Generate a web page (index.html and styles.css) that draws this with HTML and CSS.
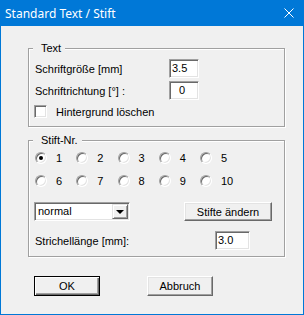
FILE: index.html
```html
<!DOCTYPE HTML>
<html>
<head>
<link rel="stylesheet" href="styles.css">
</head>
<body>
<div class="window">
    <div class="titlebar">
        <span class="title">Standard Text / Stift</span>
        <svg class="close" width="10" height="10" viewBox="0 0 10 10">
            <path d="M0.5 0.5 L9.5 9.5 M9.5 0.5 L0.5 9.5" stroke="#fff" stroke-width="1" fill="none"/>
        </svg>
    </div>
    <div class="client">
        <fieldset class="group">
            <legend>Text</legend>
            <div class="field-grid">
                <span>Schriftgröße [mm]</span>
                <span class="edit">3.5</span>
                <span>Schriftrichtung [°] :</span>
                <span class="edit edit-indent">0</span>
            </div>
            <div class="check-row">
                <span class="checkbox"></span>
                <span>Hintergrund löschen</span>
            </div>
        </fieldset>

        <fieldset class="group group-pen">
            <legend>Stift-Nr.</legend>
            <div class="radio-grid">
                <label class="radio"><span class="dot checked"></span>1</label>
                <label class="radio"><span class="dot"></span>2</label>
                <label class="radio"><span class="dot"></span>3</label>
                <label class="radio"><span class="dot"></span>4</label>
                <label class="radio"><span class="dot"></span>5</label>
                <label class="radio"><span class="dot"></span>6</label>
                <label class="radio"><span class="dot"></span>7</label>
                <label class="radio"><span class="dot"></span>8</label>
                <label class="radio"><span class="dot"></span>9</label>
                <label class="radio"><span class="dot"></span>10</label>
            </div>
            <div class="combo-row">
                <div class="combo">
                    <span class="combo-text">normal</span>
                    <span class="combo-btn"><span class="arrow"></span></span>
                </div>
                <span class="btn btn-pens">Stifte ändern</span>
            </div>
            <div class="dash-row">
                <span>Strichellänge [mm]:</span>
                <span class="edit edit-dash">3.0</span>
            </div>
        </fieldset>

        <div class="actions">
            <span class="btn btn-default">OK</span>
            <span class="btn">Abbruch</span>
        </div>
    </div>
</div>
</body>
</html>
```

FILE: styles.css
```css
body {
    margin: 0;
    background: #f0f0f0;
    font-family: "Liberation Sans", Arial, sans-serif;
    font-size: 11px;
    color: #000;
}

.window {
    width: 304px;
    height: 315px;
    box-sizing: border-box;
    border: 1px solid #0078d7;
    border-top: none;
    background: #f0f0f0;
}

.titlebar {
    height: 26px;
    margin: 0 -1px;
    padding: 0 10px 0 5px;
    display: flex;
    align-items: center;
    justify-content: space-between;
    background: #0078d7;
    color: #fff;
    font-family: "Noto Sans", sans-serif;
    font-size: 12px;
}

.client {
    padding: 16px 18px 0 27px;
}

.group {
    margin: 0;
    padding: 0 6px;
    min-width: 0;
    border: 1px solid #a0a0a0;
    box-shadow: 1px 1px 0 #fff, inset 1px 1px 0 #fff;
}

.group legend {
    margin-left: -2px;
    padding: 0 4px 0 8px;
    line-height: 13px;
    background: #f0f0f0;
}

.group-pen {
    margin-top: 7px;
}

.field-grid {
    margin-top: 4px;
    display: grid;
    grid-template-columns: 134px 30px;
    grid-auto-rows: 19px;
    row-gap: 3px;
    align-items: center;
}

.edit {
    box-sizing: border-box;
    height: 19px;
    padding-left: 2px;
    line-height: 17px;
    background: #fff;
    border: 1px solid;
    border-color: #a0a0a0 #fff #fff #a0a0a0;
    box-shadow: inset 1px 1px 0 #696969, inset -1px -1px 0 #e3e3e3;
}

.edit-indent {
    padding-left: 9px;
}

.check-row {
    margin: 5px 0 8px -1px;
    height: 13px;
    display: flex;
    align-items: center;
    gap: 9px;
}

.checkbox {
    box-sizing: border-box;
    width: 13px;
    height: 13px;
    background: #fff;
    border: 1px solid;
    border-color: #a0a0a0 #fff #fff #a0a0a0;
    box-shadow: inset 1px 1px 0 #696969, inset -1px -1px 0 #e3e3e3;
}

.radio-grid {
    margin-top: 1px;
    display: grid;
    grid-template-columns: repeat(5, 41.25px);
    grid-auto-rows: 19px;
    row-gap: 4px;
    align-items: center;
}

.radio {
    display: flex;
    align-items: center;
    gap: 9px;
}

.dot {
    box-sizing: border-box;
    width: 12px;
    height: 12px;
    border-radius: 50%;
    background: #fff;
    border: 1px solid;
    border-color: #a0a0a0 #fff #fff #a0a0a0;
    box-shadow: inset 1px 1px 0 #696969, inset -1px -1px 0 #e3e3e3;
    display: flex;
    align-items: center;
    justify-content: center;
}

.dot.checked::after {
    content: "";
    width: 4px;
    height: 4px;
    border-radius: 50%;
    background: #000;
}

.combo-row {
    margin-top: 12px;
    height: 19px;
    display: flex;
    align-items: center;
}

.combo {
    box-sizing: border-box;
    width: 96px;
    height: 19px;
    margin-left: -1px;
    display: flex;
    background: #fff;
    border: 1px solid;
    border-color: #a0a0a0 #fff #fff #a0a0a0;
    box-shadow: inset 1px 1px 0 #696969, inset -1px -1px 0 #e3e3e3;
    padding: 1px;
}

.combo-text {
    flex: 1;
    padding-left: 2px;
    line-height: 15px;
}

.combo-btn {
    box-sizing: border-box;
    width: 16px;
    height: 15px;
    background: #f0f0f0;
    border: 1px solid;
    border-color: #e3e3e3 #696969 #696969 #e3e3e3;
    box-shadow: inset 1px 1px 0 #fff, inset -1px -1px 0 #a0a0a0;
    display: flex;
    align-items: center;
    justify-content: center;
}

.arrow {
    width: 0;
    height: 0;
    border-left: 4px solid transparent;
    border-right: 4px solid transparent;
    border-top: 4px solid #000;
}

.btn {
    box-sizing: border-box;
    width: 66px;
    height: 20px;
    display: flex;
    align-items: center;
    justify-content: center;
    background: #f0f0f0;
    border: 1px solid;
    border-color: #fff #696969 #696969 #fff;
    box-shadow: inset -1px -1px 0 #a0a0a0, inset 1px 1px 0 #e3e3e3;
}

.btn-pens {
    width: 88px;
    height: 19px;
    margin-left: auto;
    margin-right: 6px;
}

.btn-default {
    border-color: #000;
    box-shadow: inset 1px 1px 0 #fff, inset -1px -1px 0 #696969, inset -2px -2px 0 #a0a0a0;
}

.dash-row {
    margin: 10px 0 6px;
    height: 19px;
    display: flex;
    align-items: center;
}

.edit-dash {
    width: 35px;
    margin-left: auto;
    margin-right: 28px;
}

.actions {
    margin: 19px 0 0 6px;
    display: flex;
    gap: 47px;
}
```
